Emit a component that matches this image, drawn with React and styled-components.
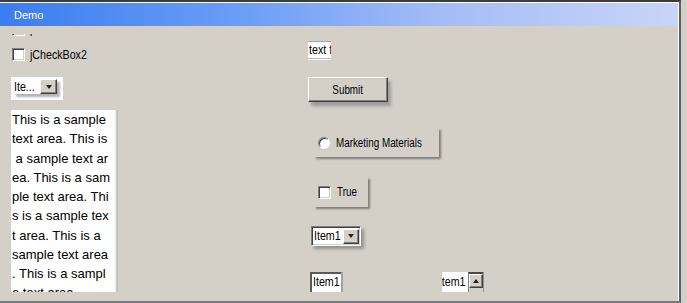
import React from "react";
import styled, { createGlobalStyle } from "styled-components";

const GlobalStyle = createGlobalStyle`
  html, body {
    margin: 0;
    padding: 0;
    background: #d4d0c8;
  }
  body {
    font-family: "Liberation Sans", Arial, sans-serif;
    font-size: 12px;
    color: #000;
  }
  * { box-sizing: border-box; }
`;

const Frame = styled.div`
  width: 681px;
  height: 303px;
  border-top: 2px solid #3c3c3c;
  border-right: 2px solid #5e5e5e;
  border-bottom: 2px solid #7a7a7a;
  background: #d4d0c8;
`;

const Inner = styled.div`
  height: 100%;
  border-top: 1px solid #ffffff;
  border-right: 1px solid #ffffff;
`;

const TitleBar = styled.div`
  height: 23px;
  display: flex;
  align-items: center;
  padding-left: 14px;
  color: #fff;
  font-size: 11px;
  background: linear-gradient(to right, #3b7cf0 0%, #6a9df6 35%, #a4bcf6 65%, #c9d5f7 100%);
`;

const Content = styled.div`
  height: 266px;
  display: flex;
  overflow: hidden;
`;

const LeftCol = styled.div`
  width: 307px;
  padding-left: 11px;
  display: flex;
  flex-direction: column;
  align-items: flex-start;
  & > * { flex-shrink: 0; }
`;

const RightCol = styled.div`
  flex: 1;
  display: flex;
  flex-direction: column;
  align-items: flex-start;
  & > * { flex-shrink: 0; }
`;

// narrow dialog font: squeeze regular glyphs sideways
const Label = styled.span`
  display: inline-block;
  white-space: nowrap;
  font-size: ${(p) => p.$size || 12}px;
  transform: scaleX(0.82);
  transform-origin: ${(p) => p.$origin || "left"} center;
`;

/* the first check box row is scrolled mostly out of view */
const ClipStrip = styled.div`
  margin-top: 8px;
  height: 2px;
  overflow: hidden;
`;

const CheckRow = styled.div`
  display: flex;
  align-items: center;
  gap: 5px;
  height: 13px;
  line-height: 13px;
  margin-left: ${(p) => p.$left || 0}px;
  margin-top: ${(p) => p.$top || 0}px;
`;

const Check = styled.span`
  width: 13px;
  height: 13px;
  background: #fff;
  border: 1px solid;
  border-color: #808080 #ffffff #ffffff #808080;
  box-shadow: inset 1px 1px #404040, inset -1px -1px #d4d0c8;
  flex: none;
`;

const Radio = styled.span`
  width: 12px;
  height: 12px;
  border-radius: 50%;
  background: #fff;
  border: 1px solid;
  border-color: #808080 #ffffff #ffffff #808080;
  box-shadow: inset 1px 1px #404040;
  flex: none;
`;

const WhitePanel = styled.div`
  margin-top: 16px;
  width: 52px;
  height: 23px;
  background: #fff;
  padding: 2px 0 0 2px;
`;

const SmallCombo = styled.div`
  width: 44px;
  height: 15px;
  display: flex;
  align-items: center;
  background: #fff;
  box-shadow: 3px 3px 2px rgba(0, 0, 0, 0.3);
`;

const ComboText = styled.span`
  flex: 1;
  padding-left: ${(p) => p.$pad || 1}px;
  overflow: hidden;
  white-space: nowrap;
  line-height: 14px;
`;

const ArrowButton = styled.span`
  width: ${(p) => p.$w || 17}px;
  height: ${(p) => p.$h || 15}px;
  flex: none;
  display: flex;
  align-items: center;
  justify-content: center;
  background: #d4d0c8;
  border: 1px solid;
  border-color: #ffffff #404040 #404040 #ffffff;
  box-shadow: inset -1px -1px #808080;
`;

const Arrow = styled.span`
  width: 0;
  height: 0;
  border-left: 3.5px solid transparent;
  border-right: 3.5px solid transparent;
  ${(p) =>
    p.$up
      ? "border-bottom: 4px solid #202020;"
      : "border-top: 4px solid #202020;"}
`;

const TextArea = styled.div`
  margin-top: 10px;
  width: 107px;
  height: 200px;
  background: #fff;
  padding-left: 1px;
  font-size: 13px;
  line-height: 19.25px;
  box-shadow: inset -3px 0 2px -1px rgba(0, 0, 0, 0.28);
`;

const TextLine = styled.div`
  white-space: pre;
`;

const TextField = styled.div`
  margin-top: 15px;
  margin-left: 1px;
  width: 23px;
  height: 19px;
  background: #fff;
  border-top: 1px solid #a8a8a8;
  box-shadow: inset 0 -1px 0 #fff, inset 0 -2px 0 #b4b4b4;
  overflow: hidden;
  padding-left: 1px;
  line-height: 16px;
`;

const Button = styled.div`
  margin-top: 17px;
  margin-left: 1px;
  width: 80px;
  height: 25px;
  display: flex;
  align-items: center;
  justify-content: center;
  background: #d4d0c8;
  border: 1px solid;
  border-color: #ffffff #404040 #404040 #ffffff;
  box-shadow: inset -1px -1px #808080, 3px 4px 3px rgba(0, 0, 0, 0.25);
`;

const ShadowPanel = styled.div`
  margin-top: ${(p) => p.$top}px;
  margin-left: 7px;
  width: ${(p) => p.$w}px;
  height: ${(p) => p.$h}px;
  display: flex;
  align-items: center;
  gap: 6px;
  padding-left: 4px;
  box-shadow: 2px 2px 2px rgba(0, 0, 0, 0.4);
`;

const Combo = styled.div`
  margin-top: 19px;
  margin-left: 4px;
  width: 50px;
  height: 20px;
  display: flex;
  align-items: center;
  padding-right: 1px;
  background: #fff;
  border: 1px solid;
  border-color: #808080 #ffffff #ffffff #808080;
  box-shadow: inset 1px 1px #404040, inset -1px -1px #d4d0c8,
    3px 3px 3px rgba(0, 0, 0, 0.3);
`;

const BottomRow = styled.div`
  margin-top: 26px;
  display: flex;
  align-items: flex-start;
`;

const ListBox = styled.div`
  margin-left: 3px;
  width: 31px;
  height: 24px;
  background: #fff;
  border-top: 2px solid #5a5a5a;
  border-left: 2px solid #5a5a5a;
  box-shadow: 2px 0 0 #a0a0a0;
  padding-left: 1px;
  line-height: 16px;
  overflow: hidden;
`;

const Spinner = styled.div`
  margin-left: 101px;
  width: 41px;
  height: 24px;
  display: flex;
  align-items: flex-start;
  box-shadow: 1px 0 0 #909090;
`;

const SpinField = styled.div`
  width: 26px;
  height: 24px;
  background: #fff;
  overflow: hidden;
  display: flex;
  justify-content: flex-end;
  line-height: 18px;
  padding: 1px 2px 0 0;
`;

const SpinSide = styled.div`
  width: 15px;
  height: 24px;
  border-top: 2px solid #4a4a4a;
  border-left: 1px solid #808080;
`;

const lines = [
  "This is a sample",
  "text area. This is",
  " a sample text ar",
  "ea. This is a sam",
  "ple text area. Thi",
  "s is a sample tex",
  "t area. This is a",
  "sample text area",
  ". This is a sampl",
  "e text area.",
];

export default function App() {
  return (
    <>
      <GlobalStyle />
      <Frame>
        <Inner>
          <TitleBar>Demo</TitleBar>
          <Content>
            <LeftCol>
              <ClipStrip>
                <CheckRow $left={1} $top={-11}>
                  <Check />
                  <Label $size={13}>jCheckBox1</Label>
                </CheckRow>
              </ClipStrip>
              <CheckRow $left={1} $top={12}>
                <Check />
                <Label $size={13}>jCheckBox2</Label>
              </CheckRow>
              <WhitePanel>
                <SmallCombo>
                  <ComboText>
                    <Label $size={13}>Ite...</Label>
                  </ComboText>
                  <ArrowButton $w={17} $h={15}>
                    <Arrow />
                  </ArrowButton>
                </SmallCombo>
              </WhitePanel>
              <TextArea>
                {lines.map((l, i) => (
                  <TextLine key={i}>{l}</TextLine>
                ))}
              </TextArea>
            </LeftCol>
            <RightCol>
              <TextField>
                <Label $size={13}>text field</Label>
              </TextField>
              <Button>
                <Label $origin="center">Submit</Label>
              </Button>
              <ShadowPanel $top={26} $w={125} $h={29}>
                <Radio />
                <Label>Marketing Materials</Label>
              </ShadowPanel>
              <ShadowPanel $top={20} $w={54} $h={30}>
                <Check />
                <Label>True</Label>
              </ShadowPanel>
              <Combo>
                <ComboText $pad={2}>
                  <Label $size={13}>Item1</Label>
                </ComboText>
                <ArrowButton $w={16} $h={15}>
                  <Arrow />
                </ArrowButton>
              </Combo>
              <BottomRow>
                <ListBox>
                  <Label $size={13}>Item1</Label>
                </ListBox>
                <Spinner>
                  <SpinField>
                    <Label $size={13} $origin="right">Item1</Label>
                  </SpinField>
                  <SpinSide>
                    <ArrowButton $w={14} $h={14}>
                      <Arrow $up />
                    </ArrowButton>
                  </SpinSide>
                </Spinner>
              </BottomRow>
            </RightCol>
          </Content>
        </Inner>
      </Frame>
    </>
  );
}
